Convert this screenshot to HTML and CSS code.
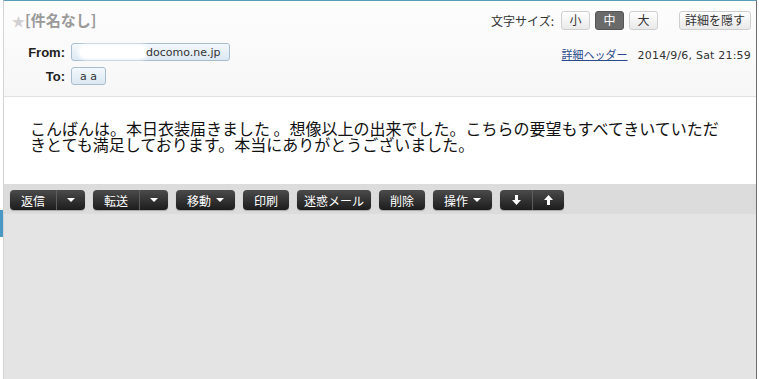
FILE: index.html
```html
<!DOCTYPE html>
<html lang="ja">
<head>
  <meta charset="UTF-8">
  <meta name="viewport" content="width=device-width, initial-scale=1.0">
  <title>メール表示</title>
  <link rel="stylesheet" href="styles.css">
</head>
<body>
  <div class="page">
    <div class="edge"><span class="edge-mark"></span></div>

    <div class="viewer">
      <header class="mail-head">
        <div class="head-main">
          <h1 class="subject"><span class="star">★</span>[件名なし]</h1>
          <div class="addr-row">
            <span class="addr-label">From:</span>
            <span class="addr-pill"><span class="mask">xxxx@</span>docomo.ne.jp</span>
          </div>
          <div class="addr-row">
            <span class="addr-label">To:</span>
            <span class="addr-pill">a a</span>
          </div>
        </div>

        <div class="head-side">
          <div class="size-bar">
            <span class="size-label">文字サイズ:</span>
            <button class="size-btn">小</button>
            <button class="size-btn active">中</button>
            <button class="size-btn">大</button>
            <button class="size-btn detail">詳細を隠す</button>
          </div>
          <div class="meta">
            <a href="#" class="meta-link">詳細ヘッダー</a>
            <span class="meta-date">2014/9/6, Sat 21:59</span>
          </div>
        </div>
      </header>

      <div class="mail-body">
        <p>こんばんは。本日衣装届きました 。想像以上の出来でした。こちらの要望もすべてきいていただきとても満足しております。本当にありがとうございました。</p>
      </div>

      <div class="toolbar">
        <div class="btn-group">
          <button class="tool-btn">返信</button>
          <button class="tool-btn arrow"><span class="caret"></span></button>
        </div>
        <div class="btn-group">
          <button class="tool-btn">転送</button>
          <button class="tool-btn arrow"><span class="caret"></span></button>
        </div>
        <div class="btn-group">
          <button class="tool-btn">移動 <span class="caret"></span></button>
        </div>
        <div class="btn-group">
          <button class="tool-btn">印刷</button>
        </div>
        <div class="btn-group">
          <button class="tool-btn narrow">迷惑メール</button>
        </div>
        <div class="btn-group">
          <button class="tool-btn">削除</button>
        </div>
        <div class="btn-group">
          <button class="tool-btn">操作 <span class="caret"></span></button>
        </div>
        <div class="btn-group">
          <button class="tool-btn nav">
            <svg width="9" height="10" viewBox="0 0 9 10"><path d="M3 0h3v5h3L4.5 10 0 5h3z" fill="#fff"/></svg>
          </button>
          <button class="tool-btn nav">
            <svg width="9" height="10" viewBox="0 0 9 10"><path d="M3 10h3V5h3L4.5 0 0 5h3z" fill="#fff"/></svg>
          </button>
        </div>
      </div>

      <div class="rest"></div>
    </div>
  </div>
</body>
</html>
```

FILE: styles.css
```css
* {
  box-sizing: border-box;
}

body {
  margin: 0;
  background: #fff;
  font-family: "Liberation Sans", "Noto Sans CJK JP", sans-serif;
  font-size: 12px;
  color: #333;
}

.page {
  display: flex;
  height: 100vh;
}

.edge {
  width: 3px;
  padding-top: 210px;
}

.edge-mark {
  display: block;
  height: 27px;
  background: #4a98c4;
}

.viewer {
  width: 754px;
  display: flex;
  flex-direction: column;
  border-top: 1px solid #5d9cb8;
  border-left: 1px solid #d4d4d4;
  border-right: 1px solid #6e6e6e;
}

/* header */

.mail-head {
  display: flex;
  justify-content: space-between;
  padding: 10px 5px 11px 8px;
  background: linear-gradient(#fdfdfd, #f7f7f7);
  border-bottom: 1px solid #e2e2e2;
}

.subject {
  margin: 0;
  height: 18px;
  line-height: 18px;
  font-size: 15px;
  font-weight: bold;
  color: #9a9a9a;
  font-family: "Noto Sans CJK JP", sans-serif;
}

.star {
  color: #d0d0d0;
  font-size: 13px;
}

.addr-row {
  display: flex;
  align-items: center;
  gap: 6px;
  margin-top: 6px;
}

.addr-row:first-of-type {
  margin-top: 14px;
}

.addr-label {
  width: 53px;
  text-align: right;
  font-size: 13px;
  font-weight: bold;
  color: #222;
}

.addr-pill {
  display: flex;
  align-items: center;
  height: 18px;
  padding: 0 8px;
  border: 1px solid #a9bdd0;
  border-radius: 3px;
  background: linear-gradient(#f3f8fc, #dce8f2);
  color: #333;
  font-family: "DejaVu Sans", sans-serif;
  font-size: 11px;
}

.mask {
  width: 66px;
  height: 12px;
  overflow: hidden;
  color: transparent;
  background: #fff;
  border-radius: 6px;
  box-shadow: 0 0 4px 2px #fff;
}

.head-side {
  display: flex;
  flex-direction: column;
  align-items: flex-end;
}

.size-bar {
  display: flex;
  align-items: center;
  height: 18px;
}

.size-label {
  margin-right: 2px;
  font-family: "Noto Sans CJK JP", sans-serif;
}

.size-btn {
  height: 19px;
  min-width: 29px;
  margin-left: 5px;
  padding: 0 6px;
  border: 1px solid #cfcfcf;
  border-radius: 3px;
  background: linear-gradient(#ffffff, #e9e9e9);
  font-family: "Noto Sans CJK JP", sans-serif;
  font-size: 12px;
  line-height: 16px;
  color: #333;
}

.size-btn.active {
  background: #6a6a6a;
  border-color: #555;
  color: #fff;
}

.size-btn.detail {
  margin-left: 21px;
  width: 72px;
  padding: 0;
  white-space: nowrap;
}

.meta {
  display: flex;
  align-items: baseline;
  gap: 10px;
  margin-top: 17px;
}

.meta-link {
  color: #2b4a8c;
  font-family: "Noto Sans CJK JP", sans-serif;
  font-size: 11px;
}

.meta-date {
  font-family: "DejaVu Sans", sans-serif;
  font-size: 11px;
  letter-spacing: 0.2px;
}

/* body */

.mail-body {
  height: 87px;
  padding: 23px 26px 0;
  background: #fff;
}

.mail-body p {
  margin: 0;
  width: 700px;
  font-family: "Noto Sans CJK JP", sans-serif;
  font-size: 16px;
  line-height: 16px;
  color: #111;
}

/* toolbar */

.toolbar {
  display: flex;
  gap: 8px;
  height: 30px;
  padding: 6px 6px 0;
  background: #dcdcdc;
}

.btn-group {
  display: flex;
  height: 20px;
  border-radius: 4px;
  overflow: hidden;
  background: linear-gradient(#4b4b4b, #1c1c1c);
  box-shadow: 0 1px 1px rgba(0, 0, 0, 0.25);
}

.tool-btn {
  display: flex;
  align-items: center;
  justify-content: center;
  gap: 5px;
  height: 20px;
  padding: 0 11px;
  border: none;
  background: transparent;
  color: #fff;
  font-family: "Noto Sans CJK JP", sans-serif;
  font-size: 12px;
}

.tool-btn + .tool-btn {
  border-left: 1px solid #5c5c5c;
}

.tool-btn.arrow {
  width: 29px;
  padding: 0;
}

.tool-btn.narrow {
  padding: 0 7px;
}

.tool-btn.nav {
  width: 32px;
  padding: 0;
}

.caret {
  width: 0;
  height: 0;
  border-left: 4px solid transparent;
  border-right: 4px solid transparent;
  border-top: 4px solid #fff;
}

.rest {
  flex: 1;
  background: #e4e4e4;
}
```
